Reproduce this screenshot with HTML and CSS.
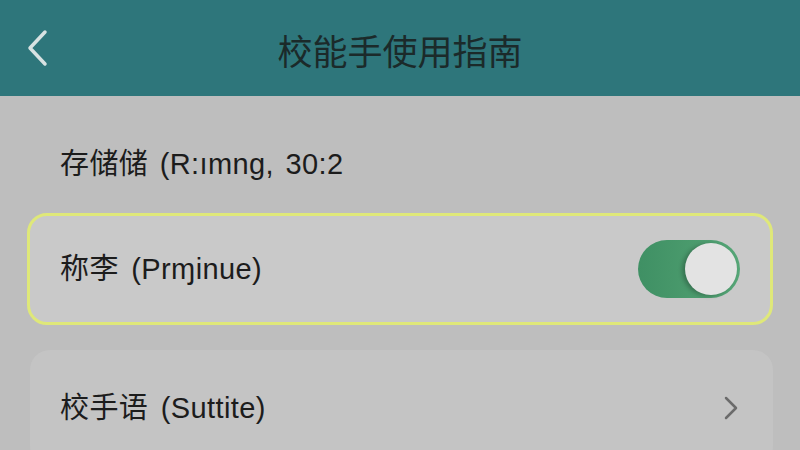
FILE: index.html
```html
<!DOCTYPE html>
<html lang="zh-CN">
<head>
  <meta charset="UTF-8">
  <meta name="viewport" content="width=device-width, initial-scale=1.0">
  <title>校能手使用指南</title>
  <link rel="stylesheet" href="styles.css">
</head>
<body>
  <header class="topbar">
    <button class="back" aria-label="返回">
      <svg width="22" height="38" viewBox="0 0 22 38" fill="none" stroke="currentColor" stroke-width="3.5" stroke-linecap="round" stroke-linejoin="round">
        <path d="M19 3L4 19l15 16"></path>
      </svg>
    </button>
    <h1>校能手使用指南</h1>
    <span></span>
  </header>

  <main class="list">
    <div class="plain-row">存储储 (R:ımng, 30:2</div>

    <div class="card card-active">
      <span class="label">称李 (Prɱinue)</span>
      <label class="switch">
        <input type="checkbox" checked>
        <span class="track"><span class="knob"></span></span>
      </label>
    </div>

    <div class="card card-link">
      <span class="label">校手语 (Suttite)</span>
      <svg class="chevron" width="16" height="26" viewBox="0 0 16 26" fill="none" stroke="currentColor" stroke-width="2.5" stroke-linecap="round" stroke-linejoin="round">
        <path d="M3 3l10 10L3 23"></path>
      </svg>
    </div>
  </main>
</body>
</html>
```

FILE: styles.css
```css
:root {
  --header-bg: #2e767b;
  --page-bg: #bebebe;
  --card-bg: #c6c6c6;
  --text-color: #1c1c1c;
  --accent: #4b9b6d;
  --highlight: #dfe879;
}

* {
  margin: 0;
  padding: 0;
  box-sizing: border-box;
  font-family: 'Liberation Sans', 'Noto Sans CJK SC', sans-serif;
}

body {
  background-color: var(--page-bg);
  color: var(--text-color);
  width: 800px;
  height: 450px;
  overflow: hidden;
}

.topbar {
  height: 96px;
  background-color: var(--header-bg);
  display: grid;
  grid-template-columns: 80px 1fr 80px;
  align-items: center;
}

.back {
  background: none;
  border: none;
  color: #d8e2e2;
  padding-left: 26px;
  display: flex;
  align-items: center;
  height: 40px;
}

.topbar h1 {
  text-align: center;
  font-size: 35px;
  font-weight: 400;
  color: #1b2a2a;
  font-family: 'Noto Sans CJK SC', sans-serif;
  padding-top: 2px;
}

.list {
  padding: 0 27px;
  display: flex;
  flex-direction: column;
}

.plain-row {
  margin-top: 48px;
  margin-bottom: 29px;
  padding-left: 33px;
  font-size: 29px;
  line-height: 40px;
  letter-spacing: 0.4px;
  word-spacing: 3px;
}

.card {
  display: flex;
  align-items: center;
  justify-content: space-between;
  border-radius: 20px;
  background-color: var(--card-bg);
}

.label {
  font-size: 29px;
  line-height: 40px;
  letter-spacing: 0.4px;
  word-spacing: 4px;
}

.card-active {
  height: 112px;
  padding: 0 30px 0 30px;
  border: 3px solid var(--highlight);
  background-color: #c9c9c9;
}

.card-link {
  height: 116px;
  margin-top: 25px;
  margin-left: 3px;
  padding: 0 34px 0 30px;
  background-color: #c4c4c4;
}

.chevron {
  color: #6b6b6b;
}

.switch input {
  display: none;
}

.track {
  display: block;
  position: relative;
  width: 102px;
  height: 58px;
  border-radius: 29px;
  background: linear-gradient(90deg, #3f9064 0%, #4c9c6e 60%, #56a677 100%);
}

.knob {
  position: absolute;
  top: 3px;
  right: 3px;
  width: 52px;
  height: 52px;
  border-radius: 50%;
  background-color: #e3e3e3;
  box-shadow: -3px 1px 4px rgba(0, 0, 0, 0.25);
}
```
